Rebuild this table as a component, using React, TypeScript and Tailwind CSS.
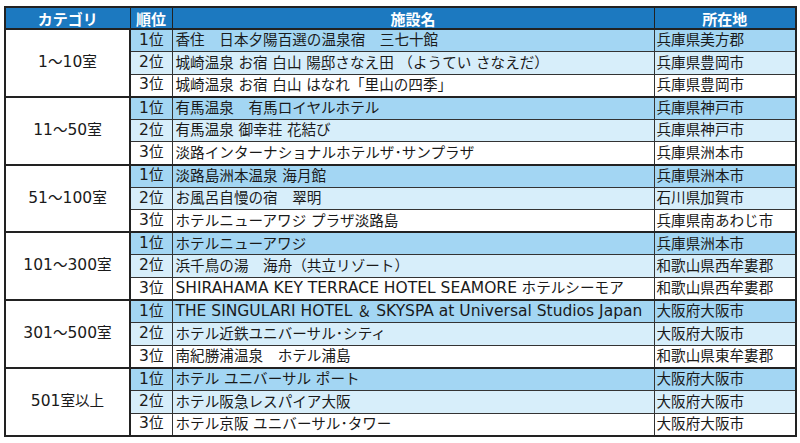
import React from "react";

type Row = { name: string; loc: string };
type Group = { cat: string; rows: Row[] };

const groups: Group[] = [
  {
    cat: "1～10室",
    rows: [
      { name: "香住　日本夕陽百選の温泉宿　三七十館", loc: "兵庫県美方郡" },
      { name: "城崎温泉 お宿 白山 陽邸さなえ田 （ようてい さなえだ）", loc: "兵庫県豊岡市" },
      { name: "城崎温泉 お宿 白山 はなれ「里山の四季」", loc: "兵庫県豊岡市" },
    ],
  },
  {
    cat: "11～50室",
    rows: [
      { name: "有馬温泉　有馬ロイヤルホテル", loc: "兵庫県神戸市" },
      { name: "有馬温泉 御幸荘 花結び", loc: "兵庫県神戸市" },
      { name: "淡路インターナショナルホテルザ･サンプラザ", loc: "兵庫県洲本市" },
    ],
  },
  {
    cat: "51～100室",
    rows: [
      { name: "淡路島洲本温泉 海月館", loc: "兵庫県洲本市" },
      { name: "お風呂自慢の宿　翠明", loc: "石川県加賀市" },
      { name: "ホテルニューアワジ プラザ淡路島", loc: "兵庫県南あわじ市" },
    ],
  },
  {
    cat: "101～300室",
    rows: [
      { name: "ホテルニューアワジ", loc: "兵庫県洲本市" },
      { name: "浜千鳥の湯　海舟（共立リゾート）", loc: "和歌山県西牟婁郡" },
      { name: "SHIRAHAMA KEY TERRACE HOTEL SEAMORE ホテルシーモア", loc: "和歌山県西牟婁郡" },
    ],
  },
  {
    cat: "301～500室",
    rows: [
      { name: "THE SINGULARI HOTEL ＆ SKYSPA at Universal Studios Japan", loc: "大阪府大阪市" },
      { name: "ホテル近鉄ユニバーサル･シティ", loc: "大阪府大阪市" },
      { name: "南紀勝浦温泉　ホテル浦島", loc: "和歌山県東牟婁郡" },
    ],
  },
  {
    cat: "501室以上",
    rows: [
      { name: "ホテル ユニバーサル ポート", loc: "大阪府大阪市" },
      { name: "ホテル阪急レスパイア大阪", loc: "大阪府大阪市" },
      { name: "ホテル京阪 ユニバーサル･タワー", loc: "大阪府大阪市" },
    ],
  },
];

const rowBg = ["bg-[#a3d6f3]", "bg-[#d7eefa]", "bg-white"];

function Mixed({ text }: { text: string }) {
  const parts = text.split(/([A-Za-z0-9&.,()'\-]+(?:[ ][A-Za-z0-9&.,()'\-]+)*)/);
  return (
    <>
      {parts.map((p, i) =>
        p === "" ? null : /[A-Za-z0-9]/.test(p) ? (
          <span key={i} className="text-[15.5px]">
            {p}
          </span>
        ) : (
          <span key={i}>{p}</span>
        )
      )}
    </>
  );
}

export default function App() {
  return (
    <div
      className="w-[800px] h-[443px] bg-white pt-[6px] pl-[4px] text-[#1a1a1a]"
      style={{ fontFamily: '"DejaVu Sans", "Noto Sans CJK JP", sans-serif' }}
    >
      <table className="w-[791px] table-fixed border-collapse border-2 border-[#222] text-[14.6px] leading-none">
        <colgroup>
          <col className="w-[125px]" />
          <col className="w-[42px]" />
          <col className="w-[482px]" />
          <col className="w-[142px]" />
        </colgroup>
        <thead>
          <tr
            className="h-[22px] bg-[#1c79c0] text-white text-[15px]"
            style={{ fontFamily: '"Noto Sans CJK JP", sans-serif' }}
          >
            <th className="border border-[#222] text-center font-bold">カテゴリ</th>
            <th className="border border-[#222] text-center font-bold">順位</th>
            <th className="border border-[#222] text-center font-bold">施設名</th>
            <th className="border border-[#222] text-center font-bold">所在地</th>
          </tr>
        </thead>
        <tbody>
          {groups.map((g) =>
            g.rows.map((r, i) => (
              <tr key={g.cat + i} className={`h-[22.6px] ${i === 0 ? "border-t-2 border-[#222]" : ""}`}>
                {i === 0 && (
                  <td rowSpan={3} className="border-2 border-[#222] bg-white text-center align-middle">
                    <Mixed text={g.cat} />
                  </td>
                )}
                <td className={`border border-[#333] text-center ${rowBg[i]}`}>
                  <span className="text-[15.5px]">{i + 1}</span>位
                </td>
                <td className={`border border-[#333] pl-[3px] whitespace-nowrap overflow-hidden ${rowBg[i]}`}>
                  <Mixed text={r.name} />
                </td>
                <td className={`border border-[#333] pl-[2px] whitespace-nowrap ${rowBg[i]}`}>{r.loc}</td>
              </tr>
            ))
          )}
        </tbody>
      </table>
    </div>
  );
}
